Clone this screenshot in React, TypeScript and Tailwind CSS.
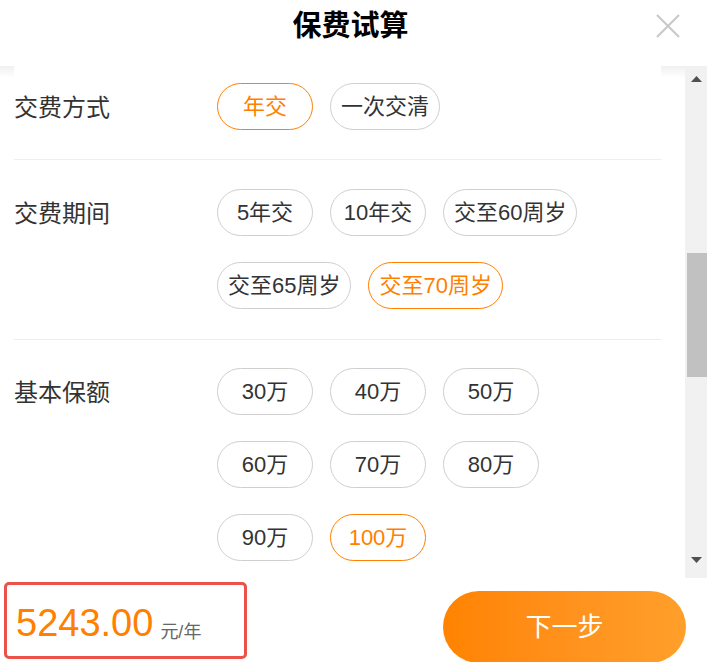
import React, { useState } from 'react';

const FONT = '"Liberation Sans", "Noto Sans CJK SC", sans-serif';

interface OptionRowProps {
  label: string;
  options: string[];
  selected: string;
  onSelect: (v: string) => void;
  className?: string;
}

const OptionRow: React.FC<OptionRowProps> = ({ label, options, selected, onSelect, className }) => (
  <div className={`flex border-b border-[#eeeeee] ${className ?? ''}`}>
    <div className="w-[203px] h-[47px] shrink-0 flex items-center text-[24px] text-[#333333] pt-[2px]">{label}</div>
    <div className="flex flex-wrap gap-x-[17px] gap-y-[26px] w-[380px]">
      {options.map((opt) => {
        const active = opt === selected;
        return (
          <button
            key={opt}
            onClick={() => onSelect(opt)}
            className={`h-[47px] min-w-[96px] px-[10px] rounded-full border text-[22px] leading-none whitespace-nowrap bg-white ${
              active ? 'border-[#ff8000] text-[#ff8000]' : 'border-[#cfcfcf] text-[#333333]'
            }`}
          >
            {opt}
          </button>
        );
      })}
    </div>
  </div>
);

export default function App() {
  const [payType, setPayType] = useState('年交');
  const [period, setPeriod] = useState('交至70周岁');
  const [amount, setAmount] = useState('100万');

  return (
    <div className="w-[707px] h-[662px] bg-white flex flex-col overflow-hidden" style={{ fontFamily: FONT }}>
      {/* header */}
      <div className="h-[66px] shrink-0 flex items-center relative">
        <h1 className="flex-1 text-center text-[29px] font-bold text-black pb-[14px] pr-[6px] leading-none">保费试算</h1>
        <button className="absolute left-[656px] top-[14px] w-[24px] h-[24px]">
          <svg width="24" height="24" viewBox="0 0 24 24">
            <path d="M1 1 L23 23 M23 1 L1 23" stroke="#c9c9c9" strokeWidth="2.2" fill="none" />
          </svg>
        </button>
      </div>

      {/* scrolling body */}
      <div className="h-[512px] shrink-0 flex">
        <div className="w-[14px] h-[12px] bg-gradient-to-b from-[#f0f0f0] to-white" />
        <div className="w-[647px] overflow-hidden">
          <OptionRow
            label="交费方式"
            options={['年交', '一次交清']}
            selected={payType}
            onSelect={setPayType}
            className="pt-[17px] pb-[29px]"
          />
          <OptionRow
            label="交费期间"
            options={['5年交', '10年交', '交至60周岁', '交至65周岁', '交至70周岁']}
            selected={period}
            onSelect={setPeriod}
            className="pt-[29px] pb-[30px]"
          />
          <OptionRow
            label="基本保额"
            options={['30万', '40万', '50万', '60万', '70万', '80万', '90万', '100万']}
            selected={amount}
            onSelect={setAmount}
            className="pt-[28px] pb-[30px]"
          />
        </div>
        <div className="w-[24px] h-[12px] bg-gradient-to-b from-[#f0f0f0] to-white" />
        {/* scrollbar */}
        <div className="w-[22px] bg-[#f1f1f1] flex flex-col items-end">
          <div className="w-full h-[20px] flex items-center justify-center pt-[6px]">
            <svg width="11" height="6" viewBox="0 0 11 6"><path d="M5.5 0 L11 6 L0 6 Z" fill="#505050" /></svg>
          </div>
          <div className="h-[167px]" />
          <div className="w-[20px] h-[124px] bg-[#c1c1c1]" />
          <div className="flex-1" />
          <div className="w-full h-[22px] flex items-start justify-center pt-[1px]">
            <svg width="11" height="6" viewBox="0 0 11 6"><path d="M0 0 L11 0 L5.5 6 Z" fill="#505050" /></svg>
          </div>
        </div>
      </div>

      {/* footer */}
      <div className="flex-1 flex justify-between pl-[4px] pr-[21px] pt-[4px]">
        <div className="w-[243px] h-[77px] border-[3px] border-[#ea524a] rounded-[5px] flex items-end pl-[9px] pb-[14px]">
          <span className="text-[38px] leading-none text-[#ff8000]">5243.00</span>
          <span className="text-[18px] leading-none text-[#666666] ml-[7px] mb-[1px]">元/年</span>
        </div>
        <button className="w-[243px] h-[72px] mt-[9px] rounded-full bg-gradient-to-r from-[#ff8300] to-[#ff9f2b] text-white text-[26px] leading-none">
          下一步
        </button>
      </div>
    </div>
  );
}
